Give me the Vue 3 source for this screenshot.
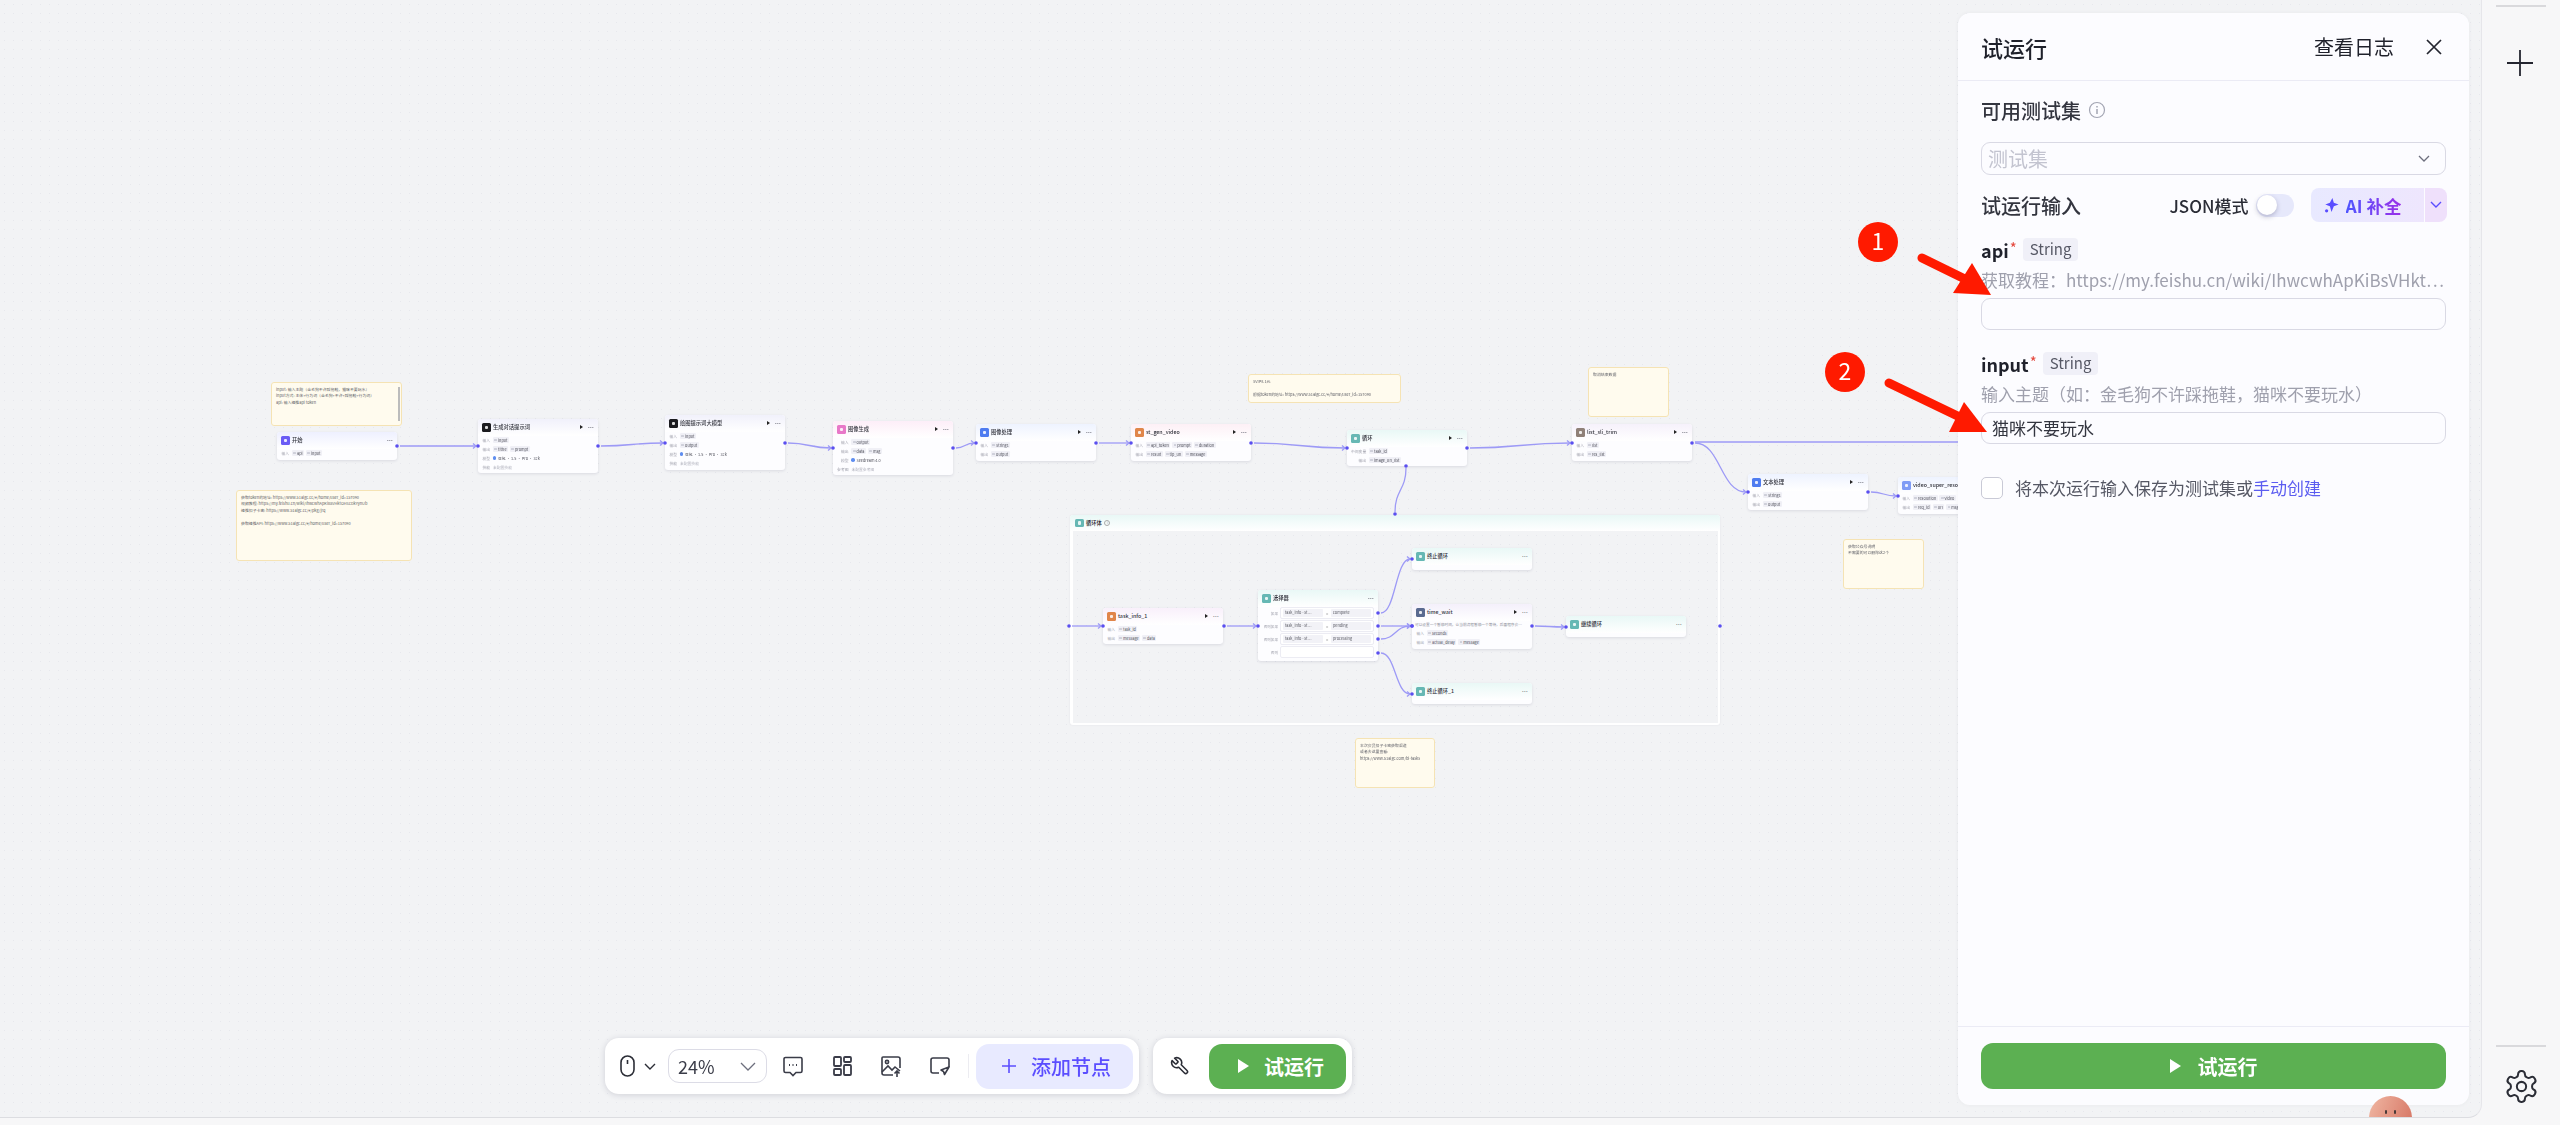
<script setup>
const nodes = [
  { x: 277, y: 432, h: 28, t: '开始', ic: '#6a5cf5', tint: '#eef0ff', rows: [{ l: '输入', c: ['api', 'input'] }] },
  { x: 478, y: 419, h: 54, t: '生成对话提示词', ic: '#1b1b1f', tint: '#f1f1fb', play: 1, rows: [{ l: '输入', c: ['input'] }, { l: '输出', c: ['tittle', 'prompt'] }, { l: '模型', m: '豆包 · 1.5 · Pro · 32k' }, { l: '技能', g: '未配置技能' }] },
  { x: 665, y: 415, h: 55, t: '绘图提示词大模型', ic: '#1b1b1f', tint: '#f1f1fb', play: 1, rows: [{ l: '输入', c: ['input'] }, { l: '输出', c: ['output'] }, { l: '模型', m: '豆包 · 1.5 · Pro · 32k' }, { l: '技能', g: '未配置技能' }] },
  { x: 833, y: 421, h: 54, t: '图像生成', ic: '#e878c8', tint: '#fdeef8', play: 1, lw: 11.5, rows: [{ l: '输入', c: ['output'] }, { l: '输出', c: ['data', 'msg'] }, { l: '模型', m: 'Seedream 4.0' }, { l: '参考图', g: '未配置参考图' }] },
  { x: 976, y: 424, h: 37, t: '图像处理', ic: '#4f7cf0', tint: '#eef3ff', play: 1, rows: [{ l: '输入', c: ['String1'] }, { l: '输出', c: ['output'] }] },
  { x: 1131, y: 424, h: 37, t: 'st_gen_video', ic: '#e0864a', tint: '#fdf0f6', play: 1, rows: [{ l: '输入', c: ['api_token', 'prompt', 'duration'] }, { l: '输出', c: ['result', 'tip_url', 'message'] }] },
  { x: 1347, y: 430, h: 36, t: '循环', ic: '#66b8b4', tint: '#e9f8f6', play: 1, lw: 15, rows: [{ l: '中间变量', c: ['task_id'] }, { l: '输出', c: ['image_url_list'] }] },
  { x: 1572, y: 424, h: 37, t: 'list_sli_trim', ic: '#8f8078', tint: '#f6f1fb', play: 1, rows: [{ l: '输入', c: ['list'] }, { l: '输出', c: ['res_list'] }] },
  { x: 1748, y: 474, h: 36, t: '文本处理', ic: '#4f7cf0', tint: '#eef3ff', play: 1, rows: [{ l: '输入', c: ['String1'] }, { l: '输出', c: ['output'] }] },
  { x: 1898, y: 477, h: 37, t: 'video_super_resolution', ic: '#7f9cf5', tint: '#eef3ff', play: 1, rows: [{ l: '输入', c: ['resolution', 'video'] }, { l: '输出', c: ['req_id', 'url', 'msg'] }] },
  { x: 1103, y: 608, h: 36, t: 'task_info_1', ic: '#e0864a', tint: '#f9f0fb', play: 1, rows: [{ l: '输入', c: ['task_id'] }, { l: '输出', c: ['message', 'data'] }] },
  { x: 1412, y: 548, h: 22, t: '终止循环', ic: '#66b8b4', tint: '#e9f8f6', rows: [] },
  { x: 1412, y: 604, h: 45, t: 'time_wait', ic: '#5a6a90', tint: '#f4f0fb', play: 1, desc: '可以设置一个暂停时间，让当前流程暂停一个等待，后面程序会…', rows: [{ l: '输入', c: ['seconds'] }, { l: '输出', c: ['actual_delay', 'message'] }] },
  { x: 1566, y: 616, h: 21, t: '继续循环', ic: '#66b8b4', tint: '#e9f8f6', rows: [] },
  { x: 1412, y: 683, h: 21, t: '终止循环_1', ic: '#66b8b4', tint: '#e9f8f6', rows: [] }
]

const branches = [
  { l: '如果', a: 'task_info - st…', b: 'complete' },
  { l: '否则如果', a: 'task_info - st…', b: 'pending' },
  { l: '否则如果', a: 'task_info - st…', b: 'processing' },
  { l: '否则' }
]

const notes = [
  { x: 271, y: 382, w: 131, h: 44, bar: 1, lines: ['input: 输入主题（金毛狗不许踩拖鞋，猫咪不要玩水）', 'input方式: 主体+行为词（金毛狗+不许+踩拖鞋+行为词）', 'api: 输入速推api token'] },
  { x: 236, y: 490, w: 176, h: 71, lines: ['获取token的地址: https://www.51aigc.cc/#/home/user_id=157090', '视频教程: https://my.feishu.cn/wiki/IhwcwhApKiBsVHktOHScDkYynUb', '速推扣子卡密: https://www.51aigc.cc/#/pkg/jrq', '', '获取速推API: https://www.51aigc.cc/#/home/user_id=157090'] },
  { x: 1248, y: 374, w: 153, h: 29, lines: ['SVIP8.1元', '', '根据token的地址: https://www.51aigc.cc/#/home/user_id=157090'] },
  { x: 1355, y: 738, w: 80, h: 50, lines: ['本次会员扣子卡密获取渠道', '或者去这里查看:', 'https://www.51aigc.com/bi-tasks'] },
  { x: 1588, y: 367, w: 81, h: 50, lines: ['取消结束数据'] },
  { x: 1843, y: 539, w: 81, h: 50, lines: ['获取公众号说明', '不需要的可以删除这2个'] }
]

const links = [
  [397, 446, 478, 446], [598, 446, 665, 443], [785, 443, 833, 448], [953, 448, 976, 443],
  [1096, 443, 1131, 443], [1251, 443, 1347, 448], [1467, 448, 1572, 443], [1692, 443, 1748, 492],
  [1868, 492, 1898, 496], [1069, 626, 1103, 626], [1224, 626, 1258, 626], [1378, 613, 1412, 559],
  [1378, 626, 1412, 626], [1378, 639, 1412, 626], [1378, 653, 1412, 694], [1532, 626, 1566, 627]
]

const edgePath = ([a, b, c, d]) => {
  const x1 = a + 3
  const x2 = c - 2
  const k = (x2 - x1) * 0.5
  return `M${x1} ${b}C${x1 + k} ${b} ${x2 - k} ${d} ${x2} ${d}`
}
const headPath = ([, , c, d]) => `M${c - 5} ${d - 2.6}L${c - 2} ${d}L${c - 5} ${d + 2.6}`

const extraPorts = [[1406, 466], [1395, 514], [1720, 626]]
const ports = [...links.flatMap(([a, b, c, d]) => [[a, b], [c, d]]), ...extraPorts]

const pos = (o) => ({ left: o.x + 'px', top: o.y + 'px', width: (o.w || 120) + 'px', height: o.h + 'px' })
const headStyle = (n) => ({ background: `linear-gradient(${n.tint}, #ffffff)` })
const iconStyle = (n) => ({ background: n.ic })
const labelStyle = (n) => ({ width: (n.lw || 8) + 'px' })
</script>

<template>
  <div class="app">
    <main class="canvas">
      <div class="graph">
        <div class="note" v-for="n in notes" :key="n.x" :style="pos(n)">
          <p v-for="(t, i) in n.lines" :key="i">{{ t || '\u00a0' }}</p>
          <span v-if="n.bar" class="note-bar"></span>
        </div>

        <section class="loop">
          <header class="loop-head"><span class="n-ic teal"><b></b></span><span class="loop-title">循环体</span><span class="mini-i">i</span></header>
          <div class="loop-body"></div>
        </section>

        <article v-for="n in nodes" :key="n.t" class="node" :style="pos(n)">
          <header class="n-head" :style="headStyle(n)">
            <span class="n-ic" :style="iconStyle(n)"><b></b></span>
            <span class="n-title">{{ n.t }}</span>
            <i v-if="n.play" class="n-play"></i>
            <span class="n-more">···</span>
          </header>
          <div v-if="n.desc" class="n-desc">{{ n.desc }}</div>
          <div v-for="r in n.rows" :key="r.l" class="n-row">
            <span class="n-label" :style="labelStyle(n)">{{ r.l }}</span>
            <span v-for="c in r.c" :key="c" class="chip">{{ c }}</span>
            <span v-if="r.m" class="model"><i></i>{{ r.m }}</span>
            <span v-if="r.g" class="ghost">{{ r.g }}</span>
          </div>
        </article>

        <article class="node picker">
          <header class="n-head teal-head">
            <span class="n-ic teal"><b></b></span>
            <span class="n-title">选择器</span>
            <span class="n-more">···</span>
          </header>
          <div class="branch" v-for="(b, i) in branches" :key="i">
            <span class="b-label">{{ b.l }}</span>
            <div class="b-box">
              <template v-if="b.a">
                <span class="b-chip">{{ b.a }}</span><span class="b-op">=</span><span class="b-chip">{{ b.b }}</span>
              </template>
            </div>
          </div>
        </article>

        <svg class="edges" width="2482" height="1118" viewBox="0 0 2482 1118" fill="none">
          <g stroke="#9d9af6" stroke-width="1.3">
            <path v-for="(e, i) in links" :key="i" :d="edgePath(e)" />
            <path v-for="(e, i) in links" :key="'h' + i" :d="headPath(e)" />
            <path d="M1695 442H1960" />
            <path d="M1406 468C1406 490 1395 490 1395 512" />
          </g>
          <circle v-for="(p, i) in ports" :key="'p' + i" :cx="p[0]" :cy="p[1]" r="1.8" fill="#5a4ff0" />
        </svg>
      </div>

      <div class="toolbar">
        <div class="bar bar-main">
          <svg class="ic-mouse" width="15" height="22" viewBox="0 0 15 22" fill="none" stroke="#2b2d36" stroke-width="1.6"><rect x="1" y="1" width="13" height="20" rx="6.5" /><path d="M7.5 5v4" /></svg>
          <svg class="ic-chev" width="12" height="7" viewBox="0 0 12 7" fill="none" stroke="#2b2d36" stroke-width="1.4"><path d="M1 1l5 5 5-5" /></svg>
          <div class="zoom"><span>24%</span><svg width="16" height="9" viewBox="0 0 16 9" fill="none" stroke="#6d6f7d" stroke-width="1.3"><path d="M1 1l7 7 7-7" /></svg></div>
          <div class="tools">
            <svg width="24" height="24" viewBox="0 0 24 24" fill="none" stroke="#3a3c48" stroke-width="1.6"><path d="M4.5 3.5h15a1.5 1.5 0 0 1 1.5 1.5v12a1.5 1.5 0 0 1-1.5 1.5H15l-3 3-3-3H4.5A1.5 1.5 0 0 1 3 17V5a1.5 1.5 0 0 1 1.5-1.5z" /><path d="M8 11h1M11.5 11h1M15 11h1" stroke-width="1.8" /></svg>
            <svg width="24" height="24" viewBox="0 0 24 24" fill="none" stroke="#3a3c48" stroke-width="1.8"><rect x="4" y="3" width="7" height="9" rx="1" /><rect x="14" y="3" width="7" height="5" rx="1" /><rect x="4" y="15" width="7" height="6" rx="1" /><rect x="14" y="11" width="7" height="10" rx="1" /></svg>
            <svg width="24" height="24" viewBox="0 0 24 24" fill="none" stroke="#3a3c48" stroke-width="1.6"><path d="M14 21H5a2 2 0 0 1-2-2V4a1 1 0 0 1 1-1h15a2 2 0 0 1 2 2v9" /><circle cx="8" cy="8" r="1.6" /><path d="M3 18l6-6 4 4 3-3 5 4" /><path d="M18 23v-6M15.5 19.5L18 17l2.500 2.500" /></svg>
            <svg width="24" height="24" viewBox="0 0 24 24" fill="none" stroke="#3a3c48" stroke-width="1.6"><path d="M11 19H5a2 2 0 0 1-2-2V6a2 2 0 0 1 2-2h14a2 2 0 0 1 2 2v7" /><path d="M21 13l-8 3 2.500 1.500 1 3z" stroke-linejoin="round" /></svg>
          </div>
          <span class="bar-sep"></span>
          <button class="add-btn"><svg width="16" height="16" viewBox="0 0 16 16" stroke="#5b4eff" stroke-width="1.6"><path d="M8 1v14M1 8h14" /></svg><span>添加节点</span></button>
        </div>
        <div class="bar bar-run">
          <svg class="ic-wrench" width="20" height="20" viewBox="0 0 24 24" fill="none" stroke="#2b2d36" stroke-width="1.9" stroke-linejoin="round"><g transform="matrix(-1 0 0 1 24 0)"><path d="M14.700 6.300a1 1 0 0 0 0 1.400l1.600 1.600a1 1 0 0 0 1.400 0l3.770-3.770a6 6 0 0 1-7.940 7.940l-6.910 6.910a2.120 2.120 0 0 1-3-3l6.910-6.910a6 6 0 0 1 7.940-7.940l-3.760 3.760z" /></g></svg>
          <button class="run-btn"><i class="tri"></i><span>试运行</span></button>
        </div>
      </div>

      <aside class="panel">
        <header class="p-head">
          <h2>试运行</h2>
          <span class="log">查看日志</span>
          <svg class="close" width="18" height="18" viewBox="0 0 18 18" stroke="#23252f" stroke-width="1.7"><path d="M2 2l14 14M16 2L2 16" /></svg>
        </header>
        <div class="p-body">
          <div class="sec-title">
            <span>可用测试集</span>
            <svg width="18" height="18" viewBox="0 0 18 18" fill="none" stroke="#a3a5b3" stroke-width="1.200"><circle cx="9" cy="9" r="7.500" /><path d="M9 8v5M9 5v1.400" stroke-width="1.500" /></svg>
          </div>
          <div class="select">
            <span>测试集</span>
            <svg width="12" height="8" viewBox="0 0 12 8" fill="none" stroke="#6d6f7d" stroke-width="1.300"><path d="M1 1l5 5 5-5" /></svg>
          </div>
          <div class="run-head">
            <span class="run-title">试运行输入</span>
            <span class="json">JSON模式</span>
            <span class="toggle"><i></i></span>
            <div class="ai">
              <div class="ai-main">
                <svg width="15" height="16" viewBox="0 0 16 18" fill="#5a4dff"><path d="M9 1l1.600 5.500L16 8.500l-5.400 2L8 17l-1.800-6.500L1 8.500l5.200-2z" /><circle cx="2.500" cy="15.500" r="1.800" /></svg>
                <span>AI 补全</span>
              </div>
              <div class="ai-more"><svg width="12" height="8" viewBox="0 0 12 8" fill="none" stroke="#5a4dff" stroke-width="1.400"><path d="M1 1l5 5 5-5" /></svg></div>
            </div>
          </div>

          <div class="f-label"><b>api</b><em>*</em><span class="tag">String</span></div>
          <div class="f-help">获取教程：https://my.feishu.cn/wiki/IhwcwhApKiBsVHkt…</div>
          <div class="f-input"></div>

          <div class="f-label second"><b>input</b><em>*</em><span class="tag">String</span></div>
          <div class="f-help">输入主题（如：金毛狗不许踩拖鞋，猫咪不要玩水）</div>
          <div class="f-input">猫咪不要玩水</div>

          <div class="save">
            <span class="check"></span>
            <span>将本次运行输入保存为测试集或<a>手动创建</a></span>
          </div>
        </div>
        <footer class="p-foot">
          <button class="run-wide"><i class="tri"></i><span>试运行</span></button>
        </footer>
      </aside>

      <div class="mascot"><i></i><i></i></div>
    </main>

    <nav class="side">
      <span class="side-line"></span>
      <svg class="plus" width="28" height="28" viewBox="0 0 28 28" stroke="#23252f" stroke-width="1.800"><path d="M14 1v26M1 14h26" /></svg>
      <span class="side-line bottom"></span>
      <svg class="gear" width="37" height="37" viewBox="0 0 24 24" fill="none" stroke="#2b2d36" stroke-width="1.300"><path d="M12.220 2h-.44a2 2 0 0 0-2 2v.18a2 2 0 0 1-1 1.730l-.43.250a2 2 0 0 1-2 0l-.15-.08a2 2 0 0 0-2.730.730l-.22.380a2 2 0 0 0 .730 2.730l.15.1a2 2 0 0 1 1 1.720v.51a2 2 0 0 1-1 1.740l-.15.09a2 2 0 0 0-.730 2.730l.22.380a2 2 0 0 0 2.730.730l.15-.08a2 2 0 0 1 2 0l.43.250a2 2 0 0 1 1 1.730V20a2 2 0 0 0 2 2h.44a2 2 0 0 0 2-2v-.18a2 2 0 0 1 1-1.730l.43-.250a2 2 0 0 1 2 0l.15.08a2 2 0 0 0 2.730-.730l.22-.39a2 2 0 0 0-.730-2.730l-.15-.08a2 2 0 0 1-1-1.740v-.5a2 2 0 0 1 1-1.740l.15-.09a2 2 0 0 0 .730-2.730l-.22-.38a2 2 0 0 0-2.730-.730l-.15.08a2 2 0 0 1-2 0l-.43-.250a2 2 0 0 1-1-1.730V4a2 2 0 0 0-2-2z" /><circle cx="12" cy="12" r="3" /></svg>
    </nav>

    <svg class="marks" width="2560" height="1125" viewBox="0 0 2560 1125">
      <circle cx="1878" cy="242" r="20" fill="#ff1a00" />
      <text x="1878" y="250" class="mark-num">1</text>
      <circle cx="1845" cy="372" r="20" fill="#ff1a00" />
      <text x="1845" y="380" class="mark-num">2</text>
      <path d="M1922 258L1973 283" stroke="#ff1a00" stroke-width="9" stroke-linecap="round" />
      <path d="M1991 295L1972 263L1953 293Z" fill="#ff1a00" />
      <path d="M1889 383L1968 421" stroke="#ff1a00" stroke-width="9" stroke-linecap="round" />
      <path d="M1987 432L1964 402L1949 432Z" fill="#ff1a00" />
    </svg>
  </div>
</template>

<style>
html, body { margin: 0; background: #f7f7f8; }
</style>

<style scoped>
.app {
  position: relative;
  display: flex;
  width: 2560px;
  height: 1125px;
  overflow: hidden;
  background: #f7f7f8;
  font-family: "Noto Sans CJK SC", "Noto Sans", sans-serif;
  color: #1f212b;
}
.canvas {
  position: relative;
  flex: none;
  box-sizing: border-box;
  display: flex;
  justify-content: flex-end;
  width: 2482px;
  height: 1118px;
  padding: 13px 12px 12px 0;
  overflow: hidden;
  background-color: #f2f3f5;
  background-image: radial-gradient(circle, #e7e8ed 0.7px, transparent 0.8px);
  background-size: 9px 9px;
  border-right: 1px solid #e6e6ea;
  border-bottom: 1px solid #dcdde1;
  border-bottom-right-radius: 14px;
}
.graph {
  position: absolute;
  inset: 0;
  filter: blur(0.55px);
}
.edges { position: absolute; left: 0; top: 0; }
.note {
  position: absolute;
  box-sizing: border-box;
  padding: 3px 4px;
  background: #fffbee;
  border: 0.8px solid #f5e3b4;
  border-radius: 3px;
  font-size: 3.900px;
  line-height: 6.400px;
  color: #5d5e66;
  overflow: hidden;
  white-space: nowrap;
}
.note p { margin: 0; }
.note-bar {
  position: absolute;
  right: 1.500px;
  top: 4px;
  width: 1.600px;
  height: 34px;
  background: #bcbcbc;
}
.loop {
  position: absolute;
  left: 1070px;
  top: 515px;
  width: 650px;
  height: 210px;
  box-sizing: border-box;
  padding: 0 2.500px 2.500px;
  display: flex;
  flex-direction: column;
  background: #ffffff;
  border-radius: 3px;
  box-shadow: 0 0 2px rgba(60, 60, 90, 0.1);
}
.loop-head {
  display: flex;
  align-items: center;
  height: 16px;
  margin: 0 -2.500px;
  padding-left: 5px;
  background: linear-gradient(#e9f8f6, #ffffff);
  border-radius: 3px 3px 0 0;
}
.loop-title { margin-left: 2.500px; font-size: 5.300px; font-weight: 500; }
.mini-i {
  margin-left: 2.500px;
  width: 4px;
  height: 4px;
  border: 0.5px solid #aaa;
  border-radius: 50%;
  font-size: 3px;
  line-height: 4px;
  text-align: center;
  color: #999;
}
.loop-body {
  flex: 1;
  background-color: #f2f3f5;
  background-image: radial-gradient(circle, #e7e8ed 0.7px, transparent 0.8px);
  background-size: 9px 9px;
}
.node {
  position: absolute;
  box-sizing: border-box;
  background: #fdfdff;
  border-radius: 3px;
  box-shadow: 0 1px 3px rgba(50, 50, 90, 0.12);
  overflow: hidden;
}
.n-head {
  display: flex;
  align-items: center;
  height: 16.500px;
  padding: 0 4px;
}
.teal-head { background: linear-gradient(#e9f8f6, #ffffff); }
.n-ic {
  flex: none;
  display: flex;
  align-items: center;
  justify-content: center;
  width: 8.500px;
  height: 8.500px;
  border-radius: 1.500px;
}
.n-ic b { width: 3.500px; height: 3.500px; background: #fff; opacity: 0.85; border-radius: 1px; }
.teal { background: #66b8b4; }
.n-title {
  margin-left: 2.400px;
  font-size: 5.300px;
  font-weight: 500;
  white-space: nowrap;
  color: #33343d;
}
.n-play {
  margin-left: auto;
  margin-right: 5px;
  width: 0;
  height: 0;
  border-left: 3.500px solid #222;
  border-top: 2.200px solid transparent;
  border-bottom: 2.200px solid transparent;
}
.n-more {
  font-family: "Liberation Sans", sans-serif;
  font-weight: 700;
  color: #70717c;
  font-size: 6px;
  line-height: 6px;
}
.n-title + .n-more { margin-left: auto; }
.n-desc {
  height: 9px;
  margin-top: -1px;
  padding: 0 3px;
  font-size: 3.700px;
  line-height: 9px;
  color: #8a8b96;
  white-space: nowrap;
  overflow: hidden;
}
.n-row {
  display: flex;
  align-items: center;
  gap: 1.800px;
  height: 9px;
  padding-left: 4px;
  font-size: 3.800px;
  white-space: nowrap;
}
.n-label { flex: none; text-align: right; margin-right: 1.200px; color: #a2a3ae; }
.chip {
  display: inline-flex;
  align-items: center;
  gap: 1px;
  height: 6.500px;
  padding: 0 1.500px;
  background: #f0f0f6;
  border-radius: 1.200px;
  color: #4c4d58;
}
.chip::before { content: ""; width: 2.600px; height: 2.600px; background: #cfd0da; border-radius: 0.500px; }
.model { display: inline-flex; align-items: center; gap: 1.500px; color: #4c4d58; }
.model i { width: 3.500px; height: 3.500px; border-radius: 50%; background: #5f8ef0; }
.ghost { color: #b3b4bf; }
.picker { left: 1258px; top: 590px; width: 120px; height: 71px; }
.branch {
  display: flex;
  align-items: center;
  height: 13px;
  padding-left: 0;
}
.b-label {
  flex: none;
  width: 20px;
  margin-right: 2px;
  text-align: right;
  font-size: 3.600px;
  color: #a2a3ae;
}
.b-box {
  box-sizing: border-box;
  display: flex;
  align-items: center;
  justify-content: space-between;
  width: 94px;
  height: 12px;
  padding: 0 2px;
  background: #ffffff;
  border: 0.600px solid #ececf3;
  border-radius: 2px;
}
.b-chip {
  flex: none;
  box-sizing: border-box;
  width: 40px;
  height: 8px;
  padding-left: 2px;
  background: #f2f2f7;
  border-radius: 1px;
  font-size: 3.800px;
  line-height: 8px;
  color: #55565f;
  white-space: nowrap;
  overflow: hidden;
}
.b-op { font-size: 4px; color: #666; }

.toolbar {
  position: absolute;
  left: 605px;
  top: 1038px;
  display: flex;
  gap: 14px;
  filter: blur(0.3px);
}
.bar {
  display: flex;
  align-items: center;
  box-sizing: border-box;
  height: 56px;
  background: #ffffff;
  border-radius: 14px;
  box-shadow: 0 1px 6px rgba(40, 40, 70, 0.16);
}
.bar-main { width: 534px; padding: 0 6px 0 15px; }
.bar-run { width: 199px; padding: 0 6px 0 17px; }
.ic-chev { margin-left: 9px; }
.zoom {
  display: flex;
  align-items: center;
  justify-content: space-between;
  box-sizing: border-box;
  width: 99px;
  height: 34px;
  margin-left: 12px;
  padding: 0 10px 0 9px;
  border: 1px solid #dcdce6;
  border-radius: 11px;
  font-size: 18px;
  color: #3a3c48;
}
.tools { display: flex; gap: 25px; margin-left: 14px; }
.bar-sep { width: 1px; height: 24px; margin-left: 16px; background: #ececf1; }
.add-btn {
  display: flex;
  align-items: center;
  width: 157px;
  height: 45px;
  margin-left: 7px;
  padding: 0 0 0 25px;
  border: 0;
  background: #e8eaff;
  border-radius: 13px;
  font: 500 20px "Noto Sans CJK SC", sans-serif;
  color: #5b4eff;
}
.add-btn span { margin-left: 14px; }
.run-btn {
  display: flex;
  align-items: center;
  width: 137px;
  height: 45px;
  margin-left: 19px;
  padding: 0 0 0 29px;
  border: 0;
  background: #5cb052;
  border-radius: 13px;
  font: 700 20px "Noto Sans CJK SC", sans-serif;
  color: #ffffff;
}
.tri {
  width: 0;
  height: 0;
  border-left: 11px solid #fff;
  border-top: 7.500px solid transparent;
  border-bottom: 7.500px solid transparent;
}
.run-btn span { margin-left: 15px; }

.panel {
  position: relative;
  flex: none;
  display: flex;
  flex-direction: column;
  width: 511px;
  background: #fcfcff;
  border-radius: 12px;
  box-shadow: 0 0 4px rgba(50, 50, 80, 0.05);
  filter: blur(0.3px);
}
.p-head {
  display: flex;
  align-items: center;
  box-sizing: border-box;
  height: 68px;
  padding: 0 26px 0 23px;
  border-bottom: 1px solid #ebebf5;
}
.p-head h2 { margin: 0; font-size: 22px; font-weight: 500; }
.log { margin-left: auto; font-size: 20px; }
.close { margin-left: 31px; }
.p-body { flex: 1; padding: 0 23px; }
.sec-title {
  display: flex;
  align-items: center;
  gap: 7px;
  height: 26px;
  margin-top: 16px;
  font-size: 20px;
  font-weight: 500;
  color: #33353f;
}
.select {
  display: flex;
  align-items: center;
  justify-content: space-between;
  box-sizing: border-box;
  height: 33px;
  margin-top: 19px;
  padding: 0 15px 0 6px;
  border: 1px solid #d9d9e4;
  border-radius: 9px;
  font-size: 20px;
  color: #c3c4d0;
}
.run-head {
  display: flex;
  align-items: center;
  height: 34px;
  margin-top: 13px;
}
.run-title { font-size: 20px; font-weight: 500; color: #33353f; }
.json { margin-left: auto; font-size: 17px; font-weight: 500; color: #2a2c36; }
.toggle {
  display: flex;
  align-items: center;
  width: 38px;
  height: 23px;
  margin-left: 7px;
  background: #e6e8fb;
  border-radius: 12px;
}
.toggle i {
  width: 20px;
  height: 20px;
  margin-left: 1px;
  background: #fff;
  border-radius: 50%;
  box-shadow: 0 2px 5px rgba(60, 60, 100, 0.3);
}
.ai {
  display: flex;
  width: 136px;
  height: 34px;
  margin-left: 17px;
  margin-right: -0.500px;
  border-radius: 8px;
  overflow: hidden;
}
.ai-main {
  display: flex;
  align-items: center;
  gap: 7px;
  width: 100px;
  padding-left: 13px;
  background: linear-gradient(90deg, #e8e9ff, #eee6fd);
}
.ai-main span {
  font-size: 17.500px;
  font-weight: 700;
  background: linear-gradient(90deg, #4f55ff, #9a30e8);
  -webkit-background-clip: text;
  background-clip: text;
  color: transparent;
}
.ai-more {
  flex: 1;
  display: flex;
  align-items: center;
  justify-content: center;
  margin-left: 1px;
  background: #efe0fb;
}
.f-label {
  display: flex;
  align-items: center;
  height: 23px;
  margin-top: 16px;
  font-size: 18px;
}
.f-label.second { margin-top: 22px; }
.f-label b { font-weight: 700; }
.f-label em { align-self: flex-start; margin-left: 1px; font-style: normal; color: #e4473c; font-size: 15px; line-height: 20px; }
.tag {
  box-sizing: border-box;
  height: 23px;
  margin-left: 6px;
  padding: 0 7px;
  background: #f0f0f8;
  border-radius: 4px;
  font-size: 15px;
  line-height: 22px;
  color: #565865;
}
.f-help {
  height: 24px;
  margin-top: 7px;
  font-size: 17px;
  line-height: 24px;
  color: #9fa0ad;
  white-space: nowrap;
}
.f-input {
  box-sizing: border-box;
  height: 32px;
  margin-top: 6px;
  padding: 0 10px;
  border: 1px solid #d9d9e4;
  border-radius: 9px;
  font-size: 17px;
  line-height: 30px;
  color: #33353f;
}
.save {
  display: flex;
  align-items: center;
  gap: 12px;
  margin-top: 33px;
  font-size: 17px;
  line-height: 22px;
  color: #565865;
}
.save a { color: #5b5cf0; }
.check {
  flex: none;
  box-sizing: border-box;
  width: 22px;
  height: 22px;
  background: #fff;
  border: 1px solid #c9cad6;
  border-radius: 5px;
}
.p-foot {
  box-sizing: border-box;
  height: 79px;
  padding: 16px 23px 0;
  border-top: 1px solid #ebebf5;
}
.run-wide {
  display: flex;
  align-items: center;
  justify-content: center;
  width: 100%;
  height: 46px;
  border: 0;
  background: #5cb052;
  border-radius: 12px;
  font: 700 20px "Noto Sans CJK SC", sans-serif;
  color: #ffffff;
}
.run-wide span { margin-left: 17px; }
.mascot {
  position: absolute;
  left: 2369px;
  top: 1096px;
  display: flex;
  justify-content: center;
  gap: 7px;
  box-sizing: border-box;
  width: 43px;
  height: 44px;
  padding-top: 14px;
  background: linear-gradient(110deg, #f0b7a3, #d4705f);
  border-radius: 50%;
}
.mascot i { width: 2px; height: 4px; background: #4a3a38; border-radius: 1px; }

.side {
  flex: 1;
  display: flex;
  flex-direction: column;
  align-items: center;
  padding-top: 5px;
  box-sizing: border-box;
  height: 1125px;
}
.side-line { width: 50px; height: 2px; background: #d9d9dc; }
.plus { margin: 42px 2px 0 0; }
.side-line.bottom { margin-top: auto; }
.gear { margin: 21px 0 20px; }

.marks { position: absolute; left: 0; top: 0; pointer-events: none; }
.mark-num { font-size: 23px; fill: #fff; text-anchor: middle; font-family: "Noto Sans CJK SC", sans-serif; }
</style>
